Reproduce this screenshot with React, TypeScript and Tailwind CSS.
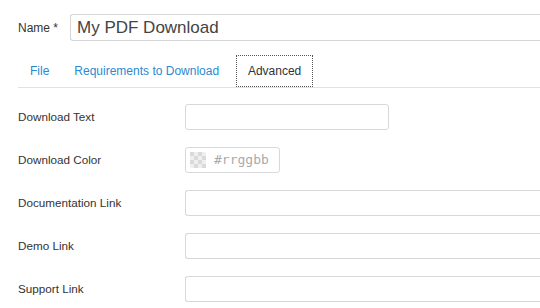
import React from "react";

const rows = [
  { label: "Documentation Link" },
  { label: "Demo Link" },
  { label: "Support Link" },
];

function Checker() {
  return (
    <svg width="16" height="16" viewBox="0 0 16 16" className="shrink-0">
      <rect x="0" y="0" width="16" height="16" rx="2" fill="#efefef" />
      {[0, 1, 2, 3].map((r) =>
        [0, 1, 2, 3].map((c) =>
          (r + c) % 2 === 0 ? (
            <rect key={`${r}-${c}`} x={c * 4} y={r * 4} width="4" height="4" fill="#dadada" />
          ) : null
        )
      )}
    </svg>
  );
}

export default function App() {
  return (
    <div
      className="w-[540px] h-[308px] overflow-hidden bg-white text-[#333]"
      style={{ fontFamily: '"Liberation Sans", Arial, sans-serif' }}
    >
      <div className="flex items-center pl-[18px] pt-[14px]">
        <span className="w-[52px] text-[12px] text-[#333]">Name *</span>
        <div className="flex-1 h-[27px] flex items-center pl-[6px] border border-[#d6d6d6] border-r-0 rounded-l-[3px] text-[17px] text-[#444]">
          My PDF Download
        </div>
      </div>

      <div className="ml-[18px] mt-[14px] flex items-stretch h-[33px] border-b border-[#e2e2e2] text-[12px]">
        <span className="pl-[12px] pr-[25px] flex items-center text-[#2a8ad2]">File</span>
        <span className="pr-[17px] flex items-center text-[#2a8ad2]">Requirements to Download</span>
        <span className="w-[77px] flex items-center justify-center border border-dotted border-[#555] text-[#333]">
          Advanced
        </span>
      </div>

      <div className="pl-[18px] mt-[16px] flex flex-col gap-[17px] text-[11.7px]">
        <div className="flex items-center h-[26px]">
          <span className="w-[167px]">Download Text</span>
          <div className="w-[204px] h-[26px] border border-[#d8d8d8] rounded-[3px]" />
        </div>
        <div className="flex items-center h-[26px]">
          <span className="w-[167px]">Download Color</span>
          <div className="w-[95px] h-[26px] flex items-center gap-[8px] pl-[4px] border border-[#d8d8d8] rounded-[3px]">
            <Checker />
            <span
              className="text-[13px] text-[#aaa]"
              style={{ fontFamily: '"DejaVu Sans Mono", monospace' }}
            >
              #rrggbb
            </span>
          </div>
        </div>
        {rows.map((r) => (
          <div key={r.label} className="flex items-center h-[26px]">
            <span className="w-[167px]">{r.label}</span>
            <div className="flex-1 h-[26px] border border-[#d8d8d8] border-r-0 rounded-l-[3px]" />
          </div>
        ))}
      </div>
    </div>
  );
}
